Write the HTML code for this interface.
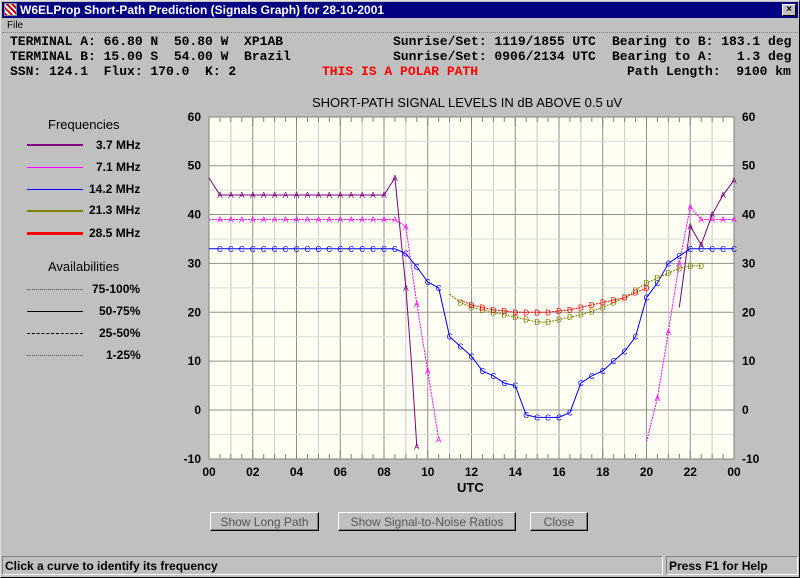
<!DOCTYPE html>
<html><head><meta charset="utf-8"><style>
body{margin:0;width:800px;height:578px;background:#c0c0c0;overflow:hidden;position:relative;font-family:"Liberation Sans",sans-serif}
.t{position:absolute;white-space:pre}
.mono{font-family:"Liberation Mono",monospace;font-weight:bold;font-size:13px;color:#000}
.btn{position:absolute;top:512px;height:19px;background:#c0c0c0;border:1px solid;border-color:#fff #000 #000 #fff;box-shadow:inset -1px -1px 0 #808080;font-size:12px;color:#555;text-align:center;line-height:19px;box-sizing:border-box}
.lg{position:absolute;font-size:12px;font-weight:bold;color:#000}
</style></head><body>
<div style="position:absolute;left:0;top:0;width:800px;height:578px;box-sizing:border-box;border:1px solid;border-color:#dfdfdf #000 #000 #dfdfdf"></div>
<div style="position:absolute;left:2px;top:2px;width:796px;height:16px;background:#000080"></div>
<div style="position:absolute;left:4px;top:3px;width:13px;height:13px;background:#fff;border:1px solid #888;box-sizing:border-box;background:repeating-linear-gradient(45deg,#c00 0 2px,#fff 2px 4px)"></div>
<div class="t" style="left:20px;top:3px;color:#fff;font-weight:bold;font-size:12px">W6ELProp Short-Path Prediction (Signals Graph) for 28-10-2001</div>
<div style="position:absolute;left:782px;top:4px;width:14px;height:12px;background:#c0c0c0;border:1px solid;border-color:#fff #000 #000 #fff;box-sizing:border-box;font-size:10px;line-height:10px;text-align:center;font-weight:bold">×</div>
<div class="t" style="left:7px;top:20px;font-size:10px">File</div>
<div style="position:absolute;left:2px;top:32px;width:796px;border-top:1px dotted #808080"></div>
<div class="t mono" style="left:10px;top:34px">TERMINAL A: 66.80 N  50.80 W  XP1AB</div>
<div class="t mono" style="left:10px;top:49px">TERMINAL B: 15.00 S  54.00 W  Brazil</div>
<div class="t mono" style="left:10px;top:64px">SSN: 124.1  Flux: 170.0  K: 2</div>
<div class="t mono" style="left:322px;top:64px;color:#f00">THIS IS A POLAR PATH</div>
<div class="t mono" style="left:393px;top:34px">Sunrise/Set: 1119/1855 UTC</div>
<div class="t mono" style="left:393px;top:49px">Sunrise/Set: 0906/2134 UTC</div>
<div class="t mono" style="left:612px;top:34px">Bearing to B: 183.1 deg</div>
<div class="t mono" style="left:612px;top:49px">Bearing to A:   1.3 deg</div>
<div class="t mono" style="left:627px;top:64px">Path Length:  9100 km</div>
<div class="t" style="left:312px;top:95px;font-size:13px">SHORT-PATH SIGNAL LEVELS IN dB ABOVE 0.5 uV</div>

<div class="t" style="left:48px;top:117px;font-size:13px">Frequencies</div>
<div class="t" style="left:48px;top:259px;font-size:13px">Availabilities</div>
<div style="position:absolute;left:27px;top:144px;width:56px;border-top:2px solid #800080"></div>
<div style="position:absolute;left:27px;top:167px;width:56px;border-top:1px solid #f0f"></div>
<div style="position:absolute;left:27px;top:189px;width:56px;border-top:1px solid #00f"></div>
<div style="position:absolute;left:27px;top:210px;width:56px;border-top:2px solid #808000"></div>
<div style="position:absolute;left:27px;top:232px;width:56px;border-top:3px solid #f00"></div>
<div class="lg" style="left:96px;top:138px">3.7 MHz</div>
<div class="lg" style="left:96px;top:160px">7.1 MHz</div>
<div class="lg" style="left:89px;top:182px">14.2 MHz</div>
<div class="lg" style="left:89px;top:203px">21.3 MHz</div>
<div class="lg" style="left:89px;top:226px">28.5 MHz</div>
<div style="position:absolute;left:27px;top:289px;width:56px;border-top:1px dotted #555"></div>
<div style="position:absolute;left:27px;top:311px;width:56px;border-top:1px solid #000"></div>
<div style="position:absolute;left:27px;top:333px;width:56px;border-top:1px dashed #000"></div>
<div style="position:absolute;left:27px;top:355px;width:56px;border-top:1px dotted #555"></div>
<div class="lg" style="left:92px;top:282px">75-100%</div>
<div class="lg" style="left:99px;top:304px">50-75%</div>
<div class="lg" style="left:99px;top:326px">25-50%</div>
<div class="lg" style="left:106px;top:348px">1-25%</div>

<svg id="ch" style="position:absolute;left:0;top:0" width="800" height="578" font-family="Liberation Sans" font-size="12" font-weight="bold"></svg>

<div class="t" style="left:457px;top:480px;font-size:13px;font-weight:bold">UTC</div>
<div class="btn" style="left:210px;width:109px">Show Long Path</div>
<div class="btn" style="left:338px;width:178px">Show Signal-to-Noise Ratios</div>
<div class="btn" style="left:530px;width:58px">Close</div>
<div style="position:absolute;left:2px;top:556px;width:661px;height:19px;border:1px solid;border-color:#808080 #fff #fff #808080;box-sizing:border-box"></div>
<div style="position:absolute;left:666px;top:556px;width:132px;height:19px;border:1px solid;border-color:#808080 #fff #fff #808080;box-sizing:border-box"></div>
<div class="t" style="left:5px;top:559px;font-size:12px;font-weight:bold">Click a curve to identify its frequency</div>
<div class="t" style="left:669px;top:559px;font-size:12px;font-weight:bold">Press F1 for Help</div>
<script>
var s=document.getElementById('ch'),h='';
function X(t){return 209+t*21.875}function Y(v){return 410-v*4.886}
h+='<rect x="209" y="117" width="525" height="342" fill="#fffff4"/>';
for(var i=1;i<24;i++){h+='<line x1="'+X(i)+'" y1="117" x2="'+X(i)+'" y2="459" stroke="'+(i%2?'#c8c8c8':'#909090')+'"/>';}
for(var v=-5;v<60;v+=5){h+='<line x1="209" y1="'+Y(v)+'" x2="734" y2="'+Y(v)+'" stroke="'+(v%10?'#d8d8d8':'#909090')+'"/>';}
for(var t=0;t<=24;t+=0.5){h+='<line x1="'+X(t)+'" y1="117" x2="'+X(t)+'" y2="'+(t%2?122:126)+'" stroke="#808080"/><line x1="'+X(t)+'" y1="459" x2="'+X(t)+'" y2="'+(t%2?454:450)+'" stroke="#808080"/>';}
h+='<rect x="209" y="117" width="525" height="342" fill="none" stroke="#808080"/>';
for(var v=-10;v<=60;v+=10){h+='<text x="201" y="'+(Y(v)+4)+'" text-anchor="end">'+v+'</text><text x="742" y="'+(Y(v)+4)+'">'+v+'</text>';}
for(var t=0;t<=24;t+=2){var l=(t%24<10?'0':'')+(t%24);h+='<text x="'+X(t)+'" y="476" text-anchor="middle">'+l+'</text>';}
function cur(pts,c,dash,letters){var p=pts.map(function(a){return X(a[0])+','+Y(a[1])}).join(' ');
h+='<polyline points="'+p+'" fill="none" stroke="'+c+'" stroke-width="1" '+(dash?'stroke-dasharray="'+dash+'"':'')+'/>';
pts.forEach(function(a,k){if(k>0&&a[0]%0.5==0)h+='<text x="'+X(a[0])+'" y="'+(Y(a[1])+3)+'" fill="'+c+'" font-size="8" font-weight="normal" text-anchor="middle">'+(letters||'A')+'</text>';});}
var P=[[0,47.5]];for(var t=0.5;t<=8;t+=0.5)P.push([t,44]);P=P.concat([[8.5,47.5],[9,25],[9.25,10],[9.5,-7.5]]);
cur(P,'#800080');cur([[21.5,21],[22,37.6],[22.5,33.8],[23,40],[23.5,44],[24,47]],'#800080');
var M=[];for(var t=0;t<=8.5;t+=0.5)M.push([t,39]);M=M.concat([[9,37.5],[9.5,21.7],[10,8],[10.5,-6]]);
cur(M,'#ff00ff','2,1');cur([[20,-6.5],[20.5,2.5],[21,16],[21.5,30],[22,41.5],[22.5,39],[23,39],[23.5,39],[24,39]],'#ff00ff','2,1');
var B=[];for(var t=0;t<=8.5;t+=0.5)B.push([t,33]);
B=B.concat([[9,32],[9.5,29.3],[10,26.2],[10.5,25],[11,15],[11.5,13],[12,11],[12.5,8],[13,7],[13.5,5.5],[14,5],[14.5,-1],[15,-1.5],[15.5,-1.5],[16,-1.5],[16.5,-0.5],[17,5.5],[17.5,7],[18,8],[18.5,10],[19,12],[19.5,15],[20,23],[20.5,26],[21,30],[21.5,31.5],[22,33],[22.5,33],[23,33],[23.5,33],[24,33]]);
cur(B,'#0000ff',null,'C');
cur([[11,23.7],[11.5,22],[12,21],[12.5,20.5],[13,20],[13.5,19.5],[14,19],[14.5,18.5],[15,18],[15.5,18],[16,18.5],[16.5,19],[17,19.5],[17.5,20.2],[18,21],[18.5,22],[19,23],[19.5,24.5],[20,26],[20.5,27],[21,28],[21.5,29],[22,29.5],[22.5,29.5]],'#808000','2,1','D');
cur([[11.5,22.5],[12,21.5],[12.5,21],[13,20.5],[13.5,20.3],[14,20],[14.5,20],[15,20],[15.5,20],[16,20.3],[16.5,20.5],[17,21],[17.5,21.5],[18,22],[18.5,22.5],[19,23],[19.5,24],[20,25]],'#ff0000','2,1','D');
s.innerHTML=h;
</script>
</body></html>
